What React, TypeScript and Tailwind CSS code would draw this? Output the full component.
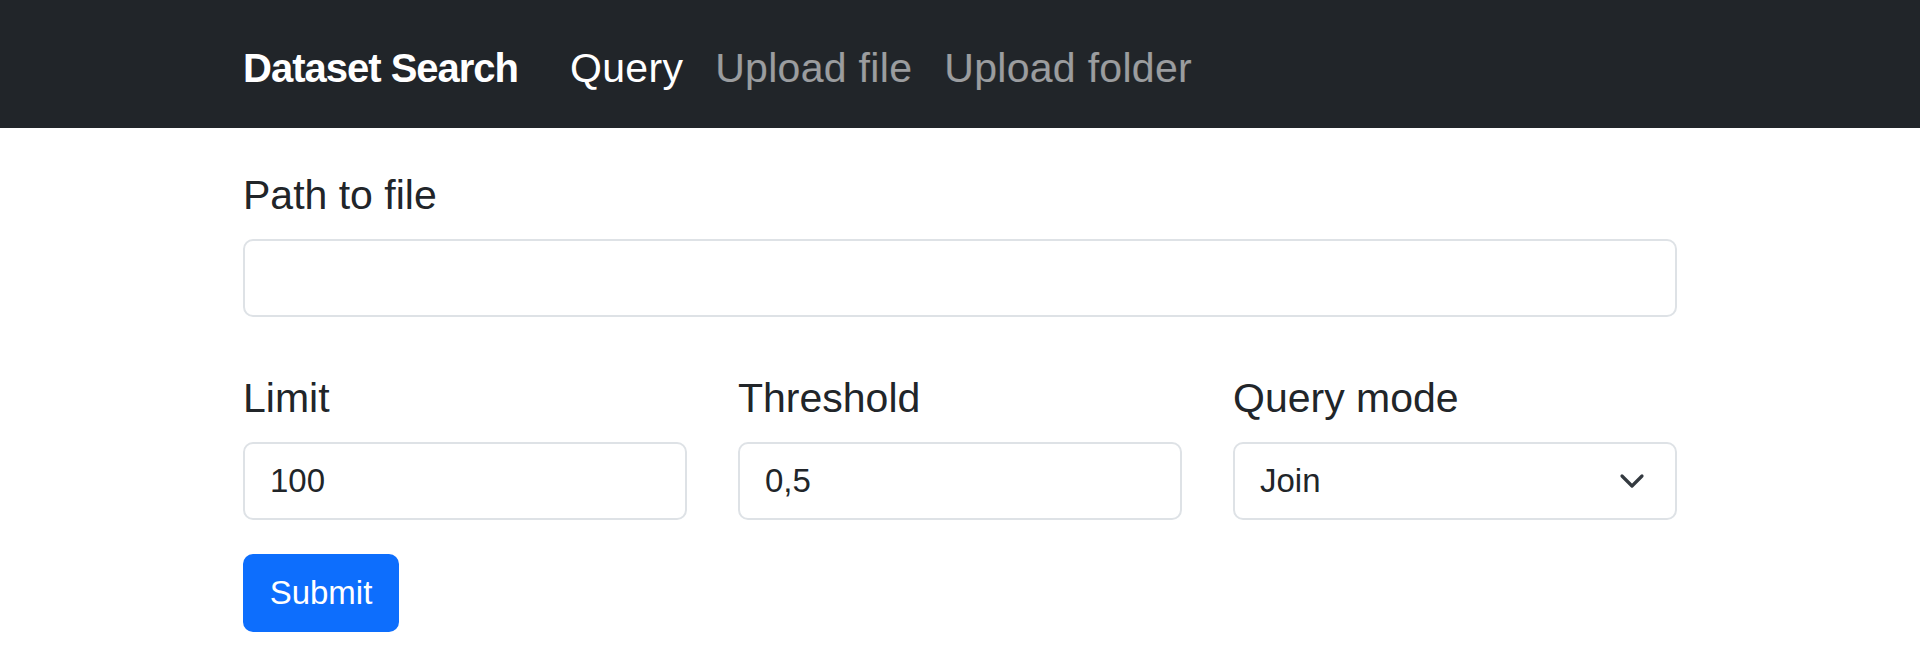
import React from 'react';

const font = { fontFamily: '"Liberation Sans", Arial, sans-serif' };

const NavBar: React.FC = () => {
    return (
        <nav className="h-[128px] bg-[#212529] pt-[8px] flex items-center">
            <div className="w-[1434px] mx-auto flex items-center">
                <span className="text-[40px] leading-[62px] font-bold tracking-[-1px] text-white mr-[36px]">
                    Dataset Search
                </span>
                <div className="flex items-center text-[41px] leading-[62px] tracking-[0.3px]">
                    <span className="px-[16px] text-white">Query</span>
                    <span className="px-[16px] text-white/55">Upload file</span>
                    <span className="px-[16px] text-white/55">Upload folder</span>
                </div>
            </div>
        </nav>
    );
};

interface FieldProps {
    label: string;
    value?: string;
    select?: boolean;
}

const Field: React.FC<FieldProps> = ({ label, value, select }) => (
    <div>
        <label className="block text-[41px] leading-[62px] mb-[13px]">{label}</label>
        <div className="h-[78px] border-2 border-[#dee2e6] rounded-[10px] bg-white flex items-center justify-between pl-[25px] pr-[30px] text-[33px]">
            <span>{value}</span>
            {select && (
                <svg width="26" height="16" viewBox="0 0 26 16" fill="none">
                    <path
                        d="M3 3 L13 13 L23 3"
                        stroke="#343a40"
                        strokeWidth="3.2"
                        strokeLinecap="round"
                        strokeLinejoin="round"
                    />
                </svg>
            )}
        </div>
    </div>
);

export default function App() {
    return (
        <div className="min-h-[662px] bg-white text-[#212529]" style={font}>
            <NavBar />
            <form className="w-[1434px] mx-auto pt-[36px]" onSubmit={(e) => e.preventDefault()}>
                <Field label="Path to file" />

                <div className="grid grid-cols-3 gap-x-[51px] mt-[50px]">
                    <Field label="Limit" value="100" />
                    <Field label="Threshold" value="0,5" />
                    <Field label="Query mode" value="Join" select />
                </div>

                <button
                    type="submit"
                    className="mt-[34px] h-[78px] w-[156px] rounded-[10px] bg-[#0d6efd] text-white text-[33px] flex items-center justify-center"
                >
                    Submit
                </button>
            </form>
        </div>
    );
}
